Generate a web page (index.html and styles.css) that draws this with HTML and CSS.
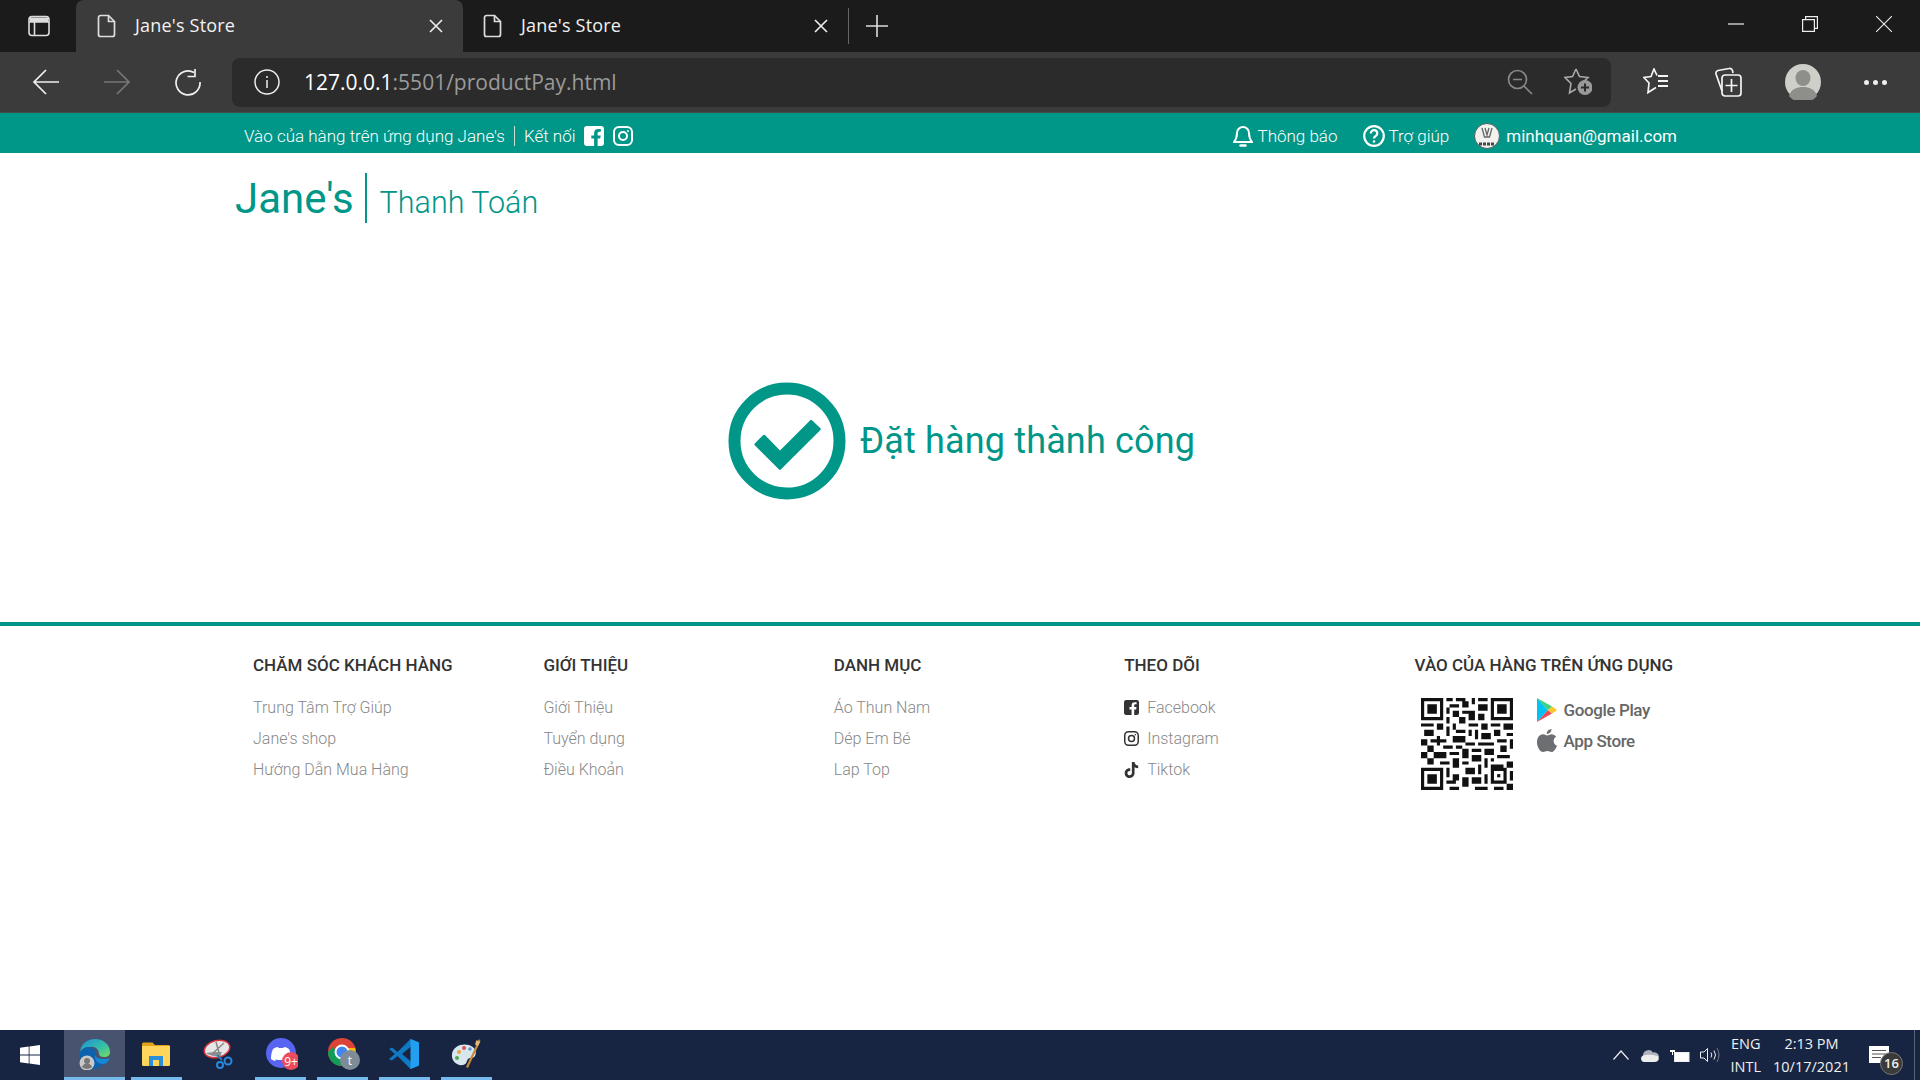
FILE: index.html
```html
<!DOCTYPE html>
<html lang="vi">
<head>
  <meta charset="UTF-8" />
  <title>Jane's Store</title>
  <link rel="stylesheet" href="styles.css">
</head>
<body>
  <!-- browser tabs -->
  <div class="tabstrip">
    <div class="tab-menu">
      <svg width="24" height="24" viewBox="0 0 24 24" fill="none" stroke="#ddd" stroke-width="1.6"><rect x="2" y="2.5" width="20" height="19" rx="3"/><path d="M2 8h20M7.500 8v13.500"/><path d="M3 3.500h18v4.500H3z" fill="#ddd" stroke="none"/></svg>
    </div>
    <div class="tab active">
      <svg class="tab-doc" width="20" height="24" viewBox="0 0 20 24" fill="none" stroke="#ddd" stroke-width="1.7"><path d="M3.500 1.500h8l6 6v13a2 2 0 0 1-2 2h-12a2 2 0 0 1-2-2v-17a2 2 0 0 1 2-2z"/><path d="M11.500 1.500v6h6"/></svg>
      <span class="tab-title">Jane's Store</span>
      <svg width="14" height="14" viewBox="0 0 14 14" stroke="#eee" stroke-width="1.6"><path d="M1 1l12 12M13 1L1 13"/></svg>
    </div>
    <div class="tab">
      <svg class="tab-doc" width="20" height="24" viewBox="0 0 20 24" fill="none" stroke="#ddd" stroke-width="1.7"><path d="M3.500 1.500h8l6 6v13a2 2 0 0 1-2 2h-12a2 2 0 0 1-2-2v-17a2 2 0 0 1 2-2z"/><path d="M11.500 1.500v6h6"/></svg>
      <span class="tab-title">Jane's Store</span>
      <svg width="14" height="14" viewBox="0 0 14 14" stroke="#eee" stroke-width="1.6"><path d="M1 1l12 12M13 1L1 13"/></svg>
    </div>
    <div class="tab-new">
      <svg width="22" height="22" viewBox="0 0 22 22" stroke="#ddd" stroke-width="1.6"><path d="M11 0v22M0 11h22"/></svg>
    </div>
    <div class="win-controls">
      <svg width="16" height="16" viewBox="0 0 16 16" stroke="#eee" stroke-width="1.2"><path d="M0 8h16"/></svg>
      <svg width="16" height="16" viewBox="0 0 16 16" fill="none" stroke="#eee" stroke-width="1.2"><path d="M.6 3.600h11.800v11.800H.6zM3.600 3.600V.6h11.800v11.800h-3"/></svg>
      <svg width="16" height="16" viewBox="0 0 16 16" stroke="#eee" stroke-width="1.1"><path d="M0 0l16 16M16 0L0 16"/></svg>
    </div>
  </div>

  <!-- browser toolbar -->
  <div class="toolbar">
    <div class="nav-btn">
      <svg width="28" height="28" viewBox="0 0 28 28" fill="none" stroke="#f0f0f0" stroke-width="1.7"><path d="M27 14H2M14 2L2 14l12 12"/></svg>
    </div>
    <div class="nav-btn">
      <svg width="28" height="28" viewBox="0 0 28 28" fill="none" stroke="#777" stroke-width="1.7"><path d="M1 14h25M14 2l12 12-12 12"/></svg>
    </div>
    <div class="nav-btn">
      <svg width="28" height="28" viewBox="0 0 28 28" fill="none" stroke="#f0f0f0" stroke-width="1.7"><path d="M20 4.500A12 12 0 1 0 26 14"/><path d="M21 1v7.500h-7.500" /></svg>
    </div>
    <div class="urlbar">
      <svg width="26" height="26" viewBox="0 0 26 26" fill="none" stroke="#eee" stroke-width="1.5"><circle cx="13" cy="13" r="12"/><path d="M13 11v8M13 7v2"/></svg>
      <div class="url"><span class="url-host">127.0.0.1</span>:5501/productPay.html</div>
      <svg class="url-zoom" width="26" height="26" viewBox="0 0 26 26" fill="none" stroke="#888" stroke-width="1.7"><circle cx="10.500" cy="10.500" r="9"/><path d="M17 17l8 8M6 10.500h9"/></svg>
      <svg width="28" height="28" viewBox="0 0 28 28" fill="none" stroke="#aaa" stroke-width="1.6"><path d="M12 1l3.500 7.500 8.500 1-5 4.500M12 1L8.500 8.500 1 9.500l6 6L5.500 25l6.500-4"/><circle cx="21" cy="19.500" r="7.500" fill="#999" stroke="none"/><path d="M21 15.500v8M17 19.500h8" stroke="#2b2b2b" stroke-width="2"/></svg>
    </div>
    <div class="tool-icons">
      <svg width="28" height="28" viewBox="0 0 28 28" fill="none" stroke="#f4f4f4" stroke-width="1.7"><path d="M14 7.500L11 1 8 8.500l-7 1L6 15l-1 9.500 8-5"/><path d="M15 8h10M15 13h10M15 18h10" stroke-width="2"/></svg>
      <svg width="28" height="30" viewBox="0 0 28 30" fill="none" stroke="#f4f4f4" stroke-width="1.700"><path d="M8 24L2 7a3 3 0 0 1 2-3.500L15 1.500a3 3 0 0 1 3.500 2L19 6"/><rect x="8" y="8" width="19" height="21" rx="3"/><path d="M17.500 12v13M11.500 18.500h12"/></svg>
      <div class="avatar">
        <svg width="36" height="36" viewBox="0 0 36 36"><circle cx="18" cy="18" r="18" fill="#cfcfca"/><ellipse cx="18" cy="14" rx="7.500" ry="8" fill="#8e8e8b"/><path d="M4 32c2-7 8-9 14-9s12 2 14 9a18 18 0 0 1-28 0z" fill="#8e8e8b"/></svg>
      </div>
      <div class="dots"><i></i><i></i><i></i></div>
    </div>
  </div>

  <!-- web page -->
  <div class="page">
    <div class="topbar">
      <div class="topbar-left">
        <span>Vào của hàng trên ứng dụng Jane's</span>
        <span class="topbar-sep"></span>
        <span>Kết nối</span>
        <svg class="topbar-social" width="20" height="20" viewBox="0 0 20 20"><path fill="#fff" d="M3 0h14a3 3 0 0 1 3 3v14a3 3 0 0 1-3 3h-3.400v-7.400h2.600l.5-3.200h-3.100V7.500c0-.9.400-1.700 1.800-1.700h1.400V3.100s-1.300-.2-2.500-.2c-2.600 0-4.200 1.500-4.200 4.300v2.200H7.300v3.200h2.800V20H3a3 3 0 0 1-3-3V3a3 3 0 0 1 3-3z"/></svg>
        <svg class="topbar-social" width="20" height="20" viewBox="0 0 20 20" fill="none" stroke="#fff" stroke-width="2"><rect x="1" y="1" width="18" height="18" rx="5"/><circle cx="10" cy="10" r="4"/><circle cx="15" cy="5" r="1" fill="#fff" stroke="none"/></svg>
      </div>
      <div class="topbar-right">
        <div class="topbar-item">
          <svg width="20" height="22" viewBox="0 0 20 22" fill="none" stroke="#fff" stroke-width="2"><path d="M10 2a6 6 0 0 1 6 6c0 5 1 6.500 3 9H1c2-2.500 3-4 3-9a6 6 0 0 1 6-6z"/><path d="M7.500 20.500h5" stroke-width="2.400" stroke-linecap="round"/></svg>
          <span>Thông báo</span>
        </div>
        <div class="topbar-item">
          <svg width="22" height="22" viewBox="0 0 22 22" fill="none" stroke="#fff" stroke-width="2.200"><circle cx="11" cy="11" r="9.800"/><path d="M7.800 8.500c0-4.500 6.500-4.300 6.500 0 0 2.500-3.300 2.500-3.300 5"/><circle cx="11" cy="16.500" r="1.300" fill="#fff" stroke="none"/></svg>
          <span>Trợ giúp</span>
        </div>
        <div class="topbar-item topbar-user">
          <svg width="26" height="26" viewBox="0 0 26 26"><circle cx="13" cy="13" r="12.500" fill="#f1f1ef" stroke="#4d6260"/><path d="M8 5l2.500 9h5L18 5M11 5l2 7 2-7" fill="none" stroke="#666" stroke-width="1.300"/><path d="M5 21h16" stroke="#444" stroke-width="3" stroke-dasharray="3 1"/></svg>
          <span>minhquan@gmail.com</span>
        </div>
      </div>
    </div>

    <header class="brand">
      <span class="brand-name">Jane's</span>
      <span class="brand-page">Thanh Toán</span>
    </header>

    <main class="success">
      <svg width="118" height="118" viewBox="0 0 118 118">
        <circle cx="59" cy="59" r="52.500" fill="none" stroke="#009688" stroke-width="12"/>
        <path fill="#009688" d="M27 63.500a1.500 1.500 0 0 1 0-2.200l8-8a1.500 1.500 0 0 1 2.200 0L52 68.400l30-30a1.500 1.500 0 0 1 2.200 0l8 7.600a1.500 1.500 0 0 1 0 2.200L53 87.300a1.500 1.500 0 0 1-2.200 0z"/>
      </svg>
      <h2 class="success-text">Đặt hàng thành công</h2>
    </main>

    <footer class="footer">
      <div class="footer-col">
        <h3>CHĂM SÓC KHÁCH HÀNG</h3>
        <a>Trung Tâm Trợ Giúp</a>
        <a>Jane's shop</a>
        <a>Hướng Dẫn Mua Hàng</a>
      </div>
      <div class="footer-col">
        <h3>GIỚI THIỆU</h3>
        <a>Giới Thiệu</a>
        <a>Tuyển dụng</a>
        <a>Điều Khoản</a>
      </div>
      <div class="footer-col">
        <h3>DANH MỤC</h3>
        <a>Áo Thun Nam</a>
        <a>Dép Em Bé</a>
        <a>Lap Top</a>
      </div>
      <div class="footer-col">
        <h3>THEO DÕI</h3>
        <a class="social-link">
          <svg width="15" height="15" viewBox="0 0 20 20"><path fill="#333" d="M3 0h14a3 3 0 0 1 3 3v14a3 3 0 0 1-3 3h-3.400v-7.400h2.600l.5-3.200h-3.100V7.500c0-.9.400-1.700 1.800-1.700h1.400V3.100s-1.300-.2-2.500-.2c-2.600 0-4.200 1.500-4.200 4.300v2.200H7.300v3.200h2.800V20H3a3 3 0 0 1-3-3V3a3 3 0 0 1 3-3z"/></svg>
          Facebook
        </a>
        <a class="social-link">
          <svg width="15" height="15" viewBox="0 0 20 20" fill="none" stroke="#333" stroke-width="2"><rect x="1" y="1" width="18" height="18" rx="5"/><circle cx="10" cy="10" r="4"/><circle cx="15" cy="5" r="1" fill="#333" stroke="none"/></svg>
          Instagram
        </a>
        <a class="social-link">
          <svg width="15" height="16" viewBox="0 0 20 22"><path fill="#333" d="M10.500 0h3.700c.3 2.800 2 4.600 5 4.900v3.800c-1.900 0-3.500-.6-5-1.600v8.100c0 4-3 6.800-6.700 6.800-3.900 0-6.900-3-6.900-6.700 0-4 3.400-7.200 7.700-6.600v3.900c-2-.5-3.900.7-3.900 2.700 0 1.700 1.400 3 3.100 3 1.800 0 3-1.300 3-3.100z"/></svg>
          Tiktok
        </a>
      </div>
      <div class="footer-col">
        <h3>VÀO CỦA HÀNG TRÊN ỨNG DỤNG</h3>
        <div class="app-row">
          <svg class="qr" width="92" height="92" viewBox="0 0 29 29" fill="#111">
            <path d="M0 0h7v7H0zM1 1v5h5V1zM2 2h3v3H2zM22 0h7v7h-7zM23 1v5h5V1zM24 2h3v3h-3zM0 22h7v7H0zM1 23v5h5v-5zM2 24h3v3H2z" fill-rule="evenodd"/>
            <path d="M8 0h2v1H8zM11 0h3v1h-3zM16 0h1v2h-1zM18 0h3v1h-3zM9 2h3v1H9zM13 1h2v2h-2zM18 2h3v2h-3zM8 3h1v2H8zM10 4h2v2h-2zM13 4h4v1h-4zM15 5h2v2h-2zM18 5h2v2h-2zM8 6h1v2H8zM12 6h2v2h-2zM10 8h1v2h-1zM15 8h3v1h-3zM19 8h2v2h-2z"/>
            <path d="M0 8h4v1H0zM5 8h2v2H5zM1 10h3v2H1zM8 9h1v3H8zM11 10h3v1h-3zM15 10h1v2h-1zM17 10h1v3h-1zM22 8h3v1h-3zM26 8h3v2h-3zM23 10h2v2h-2zM27 11h2v1h-2zM0 13h2v2H0zM3 13h5v1H3zM5 12h1v3H5zM10 12h4v2h-4zM19 11h3v2h-3zM24 13h3v1h-3zM28 13h1v3h-1z"/>
            <path d="M2 15h2v2H2zM7 15h3v1H7zM11 15h2v1h-2zM14 14h3v1h-3zM18 14h5v1h-5zM25 15h2v2h-2zM0 17h2v2H0zM4 17h4v2H4zM9 17h3v1H9zM13 16h2v3h-2zM16 16h3v1h-3zM20 16h3v2h-3zM24 18h4v1h-4zM2 19h2v2H2zM6 20h3v1H6zM10 19h2v3h-2zM16 18h3v2h-3zM20 19h1v3h-1zM22 19h1v1h-1zM27 20h2v2h-2z"/>
            <path d="M8 22h1v3H8zM13 20h2v1h-2zM14 22h3v2h-3zM18 21h1v3h-1zM22 21h4v1h-4zM22 22h1v4h-1zM22 22h5v5h-5zM8 26h3v1H8zM10 24h2v2h-2zM13 25h2v3h-2zM16 25h3v2h-3zM20 24h1v3h-1zM9 28h3v1H9zM17 28h4v1h-4zM23 28h3v1h-3zM27 27h2v2h-2zM28 23h1v3h-1z"/>
            <path d="M23 23h3v3h-3z" fill="#fff"/><path d="M24 24h1v1h-1z"/>
          </svg>
          <div class="stores">
            <div class="store">
              <svg width="20" height="24" viewBox="0 0 20 24"><path fill="#00c3f4" d="M0 0v24l11-12z"/><path fill="#3fd17a" d="M0 0l15 8.500-4 3.500z"/><path fill="#ea4a56" d="M0 24l15-8.500-4-3.500z"/><path fill="#fbc52b" d="M15 8.500l5 3.500-5 3.500-4-3.500z"/></svg>
              <span>Google Play</span>
            </div>
            <div class="store">
              <svg width="20" height="24" viewBox="0 0 20 24"><path fill="#6d6e71" d="M14.500 0c.2 2.700-2.300 5.100-4.700 4.900C9.500 2.400 12 .2 14.500 0zM10 6.500c1.200 0 2.700-1.300 4.600-1.300 1.800 0 3.600 1 4.500 2.500-3.700 2.200-3.100 7.500.9 9-1.300 3.200-3.200 6.300-5.400 6.300-1.500 0-2.300-1-4.200-1s-2.800 1-4.200 1C2.800 23 0 17.700 0 13.200 0 8.300 3 5.300 6 5.300c1.600 0 3 1.200 4 1.200z"/></svg>
              <span>App Store</span>
            </div>
          </div>
        </div>
      </div>
    </footer>
  </div>

  <!-- windows taskbar -->
  <div class="taskbar">
    <div class="task-start">
      <svg width="20" height="20" viewBox="0 0 20 20" fill="#fff"><path d="M0 2.800l8.700-1.200v7.900H0zM9.500 1.400L20 0v9.500H9.500zM0 10.400h8.700v8L0 17.200zM9.500 10.400H20V20L9.500 18.600z"/></svg>
    </div>
    <div class="task-app current">
      <svg width="32" height="32" viewBox="0 0 32 32">
        <defs><linearGradient id="edgeA" x1="0" y1="0" x2="1" y2="1"><stop offset="0" stop-color="#1f8fd8"/><stop offset=".6" stop-color="#35c1a5"/><stop offset="1" stop-color="#7ddc5a"/></linearGradient></defs>
        <path fill="url(#edgeA)" d="M1 14C2 6 8 1 16 1c9 0 15 6 15 13 0 3-2 5-6 5-3 0-5-1-5-3 0-5-4-8-9-7-5 0-8 2-10 5z"/>
        <path fill="#0c62ad" d="M1 14c2-3 5-5 9-5 5 0 7 4 6 8-1 5 3 9 8 9-2 3-6 5-10 5C6 31 0 23 1 14z"/>
        <path fill="#1288d8" d="M16 17c-1 5 3 9 8 9 3 0 5-2 7-6-2 1-4 1-6 1-4 0-8-1-9-4z"/>
        <circle cx="8" cy="25" r="7.500" fill="#c9c9c9"/><circle cx="8" cy="23" r="3" fill="#777"/><path d="M3 29c1-3 3-3.500 5-3.500s4 .5 5 3.500a7 7 0 0 1-10 0z" fill="#777"/>
      </svg>
    </div>
    <div class="task-app running">
      <svg width="28" height="24" viewBox="0 0 28 24"><path fill="#e3a21a" d="M0 2a1.500 1.500 0 0 1 1.500-1.500h9L13 3h13.500A1.500 1.500 0 0 1 28 4.500V8H0z"/><path fill="#ffd55c" d="M0 4h28v18.500a1.500 1.500 0 0 1-1.500 1.500h-25A1.500 1.500 0 0 1 0 22.500z"/><path fill="#2b8fd8" d="M7 14h14v10h-4v-6h-6v6H7z"/></svg>
    </div>
    <div class="task-app">
      <svg width="30" height="30" viewBox="0 0 30 30"><ellipse cx="14" cy="10" rx="13" ry="8.500" fill="#e6e6e6" stroke="#d9333f" stroke-width="1.500" transform="rotate(-14 14 10)"/><path d="M3 14c5 3 10 4 14 3l2-4-8 0z" fill="#8d8f94"/><path d="M13 3l4 14M21 4L9 15" stroke="#888" stroke-width="1.500"/><path d="M14 16l5 5" stroke="#2b7cc0" stroke-width="2"/><circle cx="17" cy="26" r="3" fill="none" stroke="#2b88d8" stroke-width="2"/><circle cx="25" cy="22" r="3.500" fill="none" stroke="#2b88d8" stroke-width="2"/></svg>
    </div>
    <div class="task-app running">
      <svg class="icon-nudge" width="32" height="32" viewBox="0 0 32 32"><circle cx="15" cy="15" r="15" fill="#5865f2"/><path fill="#fff" d="M7 11c3-2 5-2 5-2l.6 1h4.800l.6-1s2 0 5 2c2 4 2 8 2 10-2 1.500-4 2-4 2l-1-1.500c-3 .8-7 .8-10 0L9 23s-2-.5-4-2c0-2 0-6 2-10z"/><circle cx="25" cy="23" r="9" fill="#ed4c5c"/><text class="badge-text" x="25" y="27.500" text-anchor="middle">9+</text></svg>
    </div>
    <div class="task-app running">
      <svg class="icon-nudge" width="32" height="32" viewBox="0 0 32 32"><circle cx="14" cy="14" r="14" fill="#db4437"/><path fill="#0f9d58" d="M0 14a14 14 0 0 0 14 14l7-10-9 0-7-9z"/><path fill="#fbbc05" d="M14 28a14 14 0 0 0 13-18l-12 0 5 8z"/><circle cx="14" cy="14" r="6.500" fill="#4285f4" stroke="#fff" stroke-width="2"/><circle cx="22" cy="22" r="10" fill="#7d8c97"/><text class="badge-text" x="22" y="27" text-anchor="middle">t</text></svg>
    </div>
    <div class="task-app running">
      <svg width="30" height="30" viewBox="0 0 30 30"><path fill="#0f79c4" d="M21.500 0L8.500 13 3 8.500 0 10l6 5-6 5 3 1.500L8.500 17l13 13 8.500-3.500V3.500zm.5 7.500V22.500l-9-7.500z"/><path fill="#22a0ef" d="M21.500 0L30 3.500v23L21.500 30z"/></svg>
    </div>
    <div class="task-app running">
      <svg width="30" height="30" viewBox="0 0 30 30"><path fill="#d8e6ee" d="M1 15C2 7 11 4 18 6c6 2 8 7 6 11-2 3-5 1-7 3-2 3-1 5-5 6-6 1-12-4-11-11z"/><circle cx="8" cy="13" r="2" fill="#e8a33a"/><circle cx="13" cy="9" r="2" fill="#d9534f"/><circle cx="6" cy="19" r="2" fill="#4cae4c"/><circle cx="19" cy="10" r="1.800" fill="#5b9bd5"/><path d="M28 0l1.500 2L17 29l-2-1z" fill="#c98a3c"/><path d="M25.500 1L29 3l-2 4-3-1.500z" fill="#e0b87a"/></svg>
    </div>
    <div class="tray">
      <svg width="16" height="10" viewBox="0 0 16 10" fill="none" stroke="#eee" stroke-width="1.200"><path d="M.5 9.500L8 1l7.500 8.500"/></svg>
      <svg class="tray-cloud" width="20" height="13" viewBox="0 0 20 13"><path fill="#aeb3bb" d="M4 7a5.500 5.500 0 0 1 10-3.500A4.800 4.800 0 0 1 20 8z"/><path fill="#eceded" d="M4.500 13A3.500 3.500 0 0 1 4 6.500c4-1 9-1 15 .5 2 3 0 6-3.500 6z"/></svg>
      <svg class="tray-battery" width="20" height="13" viewBox="0 0 20 13"><rect x="4.500" y="3.500" width="14.500" height="9" fill="#fff" stroke="#eee"/><path d="M0 1h5v2H0zM2 3h1v3H2z" fill="#fff"/></svg>
      <svg class="tray-sound" width="20" height="16" viewBox="0 0 20 16" fill="none" stroke="#eee"><path d="M.5 5h3.500L7.500 1.500v13L4 11H.5z"/><path d="M11 5.500q1.500 2.500 0 5M14 3.500q3 4.500 0 9" /><path d="M17 1q4 7 0 14" stroke="#778"/></svg>
      <div class="tray-lang"><span>ENG</span><span>INTL</span></div>
      <div class="tray-clock"><span>2:13 PM</span><span>10/17/2021</span></div>
      <div class="tray-notify">
        <svg width="20" height="18" viewBox="0 0 20 18"><path fill="#fff" d="M0 0h20v17H0z"/><path d="M3 4.500h14M3 8h14M3 11.500h9" stroke="#555" stroke-width="1.200"/></svg>
        <span class="notify-badge">16</span>
      </div>
      <div class="show-desktop"></div>
    </div>
  </div>
</body>
</html>
```

FILE: styles.css
```css
* {
  box-sizing: border-box;
}
html, body {
  height: 100%;
}
body {
  margin: 0;
  display: flex;
  flex-direction: column;
  overflow: hidden;
  font-family: Roboto, Arial, sans-serif;
  background-color: #fff;
}
svg {
  display: block;
  flex: none;
}

/* browser tabs */
.tabstrip {
  height: 52px;
  display: flex;
  background-color: #1b1b1b;
  color: #f2f2f2;
  font-family: "Open Sans", sans-serif;
  font-size: 18px;
}
.tab-menu {
  width: 76px;
  display: flex;
  align-items: center;
  padding-left: 27px;
}
.tab {
  width: 385px;
  display: flex;
  align-items: center;
  padding: 0 20px;
}
.tab.active {
  width: 387px;
  padding-left: 21px;
  background-color: #3b3b3b;
  border-radius: 8px 8px 0 0;
}
.tab-doc {
  margin-right: 18px;
}
.tab-title {
  flex: 1;
  padding-bottom: 2px;
  letter-spacing: 0.2px;
}
.tab-new {
  width: 56px;
  display: flex;
  align-items: center;
  justify-content: center;
  border-left: 1px solid #666;
  margin: 8px 0;
}
.win-controls {
  margin-left: auto;
  width: 228px;
  display: flex;
  align-items: center;
  justify-content: space-between;
  padding: 0 28px 5px 36px;
}

/* browser toolbar */
.toolbar {
  height: 61px;
  display: flex;
  align-items: center;
  padding-left: 10px;
  background-color: #3b3b3b;
  border-bottom: 1px solid #4a4a4a;
}
.nav-btn {
  width: 71px;
  display: flex;
  justify-content: center;
}
.urlbar {
  width: 1379px;
  height: 49px;
  margin-left: 9px;
  display: flex;
  align-items: center;
  padding: 0 19px 0 22px;
  background-color: #2b2b2b;
  border-radius: 8px;
}
.url {
  flex: 1;
  margin-left: 24px;
  font-family: "Open Sans", sans-serif;
  font-size: 21px;
  color: #9a9a9a;
}
.url-host {
  color: #fff;
}
.url-zoom {
  margin-right: 31px;
}
.tool-icons {
  flex: 1;
  display: flex;
  align-items: center;
  padding-left: 32px;
  gap: 43px;
}
.dots {
  display: flex;
  gap: 4px;
}
.dots i {
  width: 5px;
  height: 5px;
  border-radius: 50%;
  background-color: #eee;
}

/* web page */
.page {
  flex: 1;
  display: flex;
  flex-direction: column;
}
.topbar {
  height: 40px;
  flex: none;
  display: flex;
  align-items: center;
  justify-content: space-between;
  padding: 5px 243px 0 244px;
  background-color: #009688;
  color: #fff;
  font-size: 17px;
  font-weight: 300;
}
.topbar-left, .topbar-right, .topbar-item {
  display: flex;
  align-items: center;
}
.topbar-sep {
  width: 1px;
  height: 20px;
  margin: 0 9px;
  background-color: #c9ded6;
}
.topbar-social {
  margin-left: 8px;
}
.topbar-social:last-child {
  margin-left: 9px;
}
.topbar-right {
  gap: 25px;
}
.topbar-item {
  gap: 4px;
}
.topbar-user {
  gap: 6px;
  font-weight: 400;
}
.brand {
  flex: none;
  display: flex;
  align-items: flex-end;
  padding: 20px 0 0 235px;
  color: #009688;
}
.brand-name {
  height: 50px;
  padding-right: 11px;
  border-right: 2px solid #009688;
  font-size: 42px;
  line-height: 52px;
}
.brand-page {
  margin-left: 13px;
  font-size: 30.500px;
  font-weight: 300;
  line-height: 60px;
  height: 50px;
}
.success {
  flex: 1;
  display: flex;
  align-items: center;
  padding: 36px 0 0 728px;
  color: #009688;
}
.success-text {
  margin: 0 0 0 14px;
  font-size: 36px;
  font-weight: 400;
  letter-spacing: 0.15px;
}
.footer {
  height: 408px;
  flex: none;
  display: grid;
  grid-template-columns: repeat(5, 290.4px);
  padding: 30px 0 0 253px;
  border-top: 4px solid #009688;
}
.footer-col {
  display: flex;
  flex-direction: column;
  align-items: flex-start;
}
.footer-col h3 {
  margin: 0 0 17px;
  font-size: 17px;
  line-height: 19px;
  font-weight: 500;
  color: #333;
}
.footer-col a {
  height: 31px;
  display: flex;
  align-items: center;
  font-size: 16px;
  font-weight: 300;
  color: #888;
}
.social-link {
  gap: 8px;
}
.app-row {
  display: flex;
  gap: 24px;
  padding: 6px 0 0 6px;
}
.stores {
  display: flex;
  flex-direction: column;
  gap: 7px;
}
.store {
  display: flex;
  align-items: center;
  gap: 7px;
  font-size: 17px;
  font-weight: 500;
  color: #666;
  letter-spacing: -0.4px;
}

/* windows taskbar */
.taskbar {
  height: 50px;
  flex: none;
  display: flex;
  background-color: #172542;
  color: #f0f0f0;
  font-family: "Open Sans", sans-serif;
  font-size: 14.500px;
}
.task-start {
  width: 64px;
  display: flex;
  align-items: center;
  padding-left: 20px;
}
.task-app {
  width: 62px;
  display: flex;
  align-items: center;
  justify-content: center;
  border-bottom: 3px solid transparent;
}
.task-app.running {
  position: relative;
}
.task-app.running::after {
  content: "";
  position: absolute;
  left: 6px;
  right: 5px;
  bottom: -3px;
  height: 3px;
  background-color: #76b9ed;
}
.task-app.current {
  width: 61px;
  background-color: #47536f;
  border-bottom-color: #76b9ed;
}
.icon-nudge {
  margin-left: 3px;
}
.badge-text {
  font-family: "Open Sans", sans-serif;
  font-size: 12px;
  fill: #fff;
}
.tray {
  margin-left: auto;
  display: flex;
  align-items: center;
}
.tray-cloud {
  margin-left: 10px;
}
.tray-battery {
  margin-left: 11px;
}
.tray-sound {
  margin-left: 10px;
}
.tray-lang, .tray-clock {
  display: flex;
  flex-direction: column;
  align-items: center;
  line-height: 23px;
}
.tray-lang {
  margin-left: 11px;
}
.tray-clock {
  margin-left: 12px;
}
.tray-notify {
  position: relative;
  margin-left: 19px;
  margin-right: 25px;
}
.notify-badge {
  position: absolute;
  left: 11px;
  top: 6px;
  width: 23px;
  height: 23px;
  border-radius: 50%;
  background-color: #3a3a3a;
  border: 1px solid #777;
  text-align: center;
  font-size: 13px;
  font-weight: 600;
  line-height: 21px;
}
.show-desktop {
  width: 1px;
  height: 50px;
  margin-right: 5px;
  background-color: #5a6578;
}
```
